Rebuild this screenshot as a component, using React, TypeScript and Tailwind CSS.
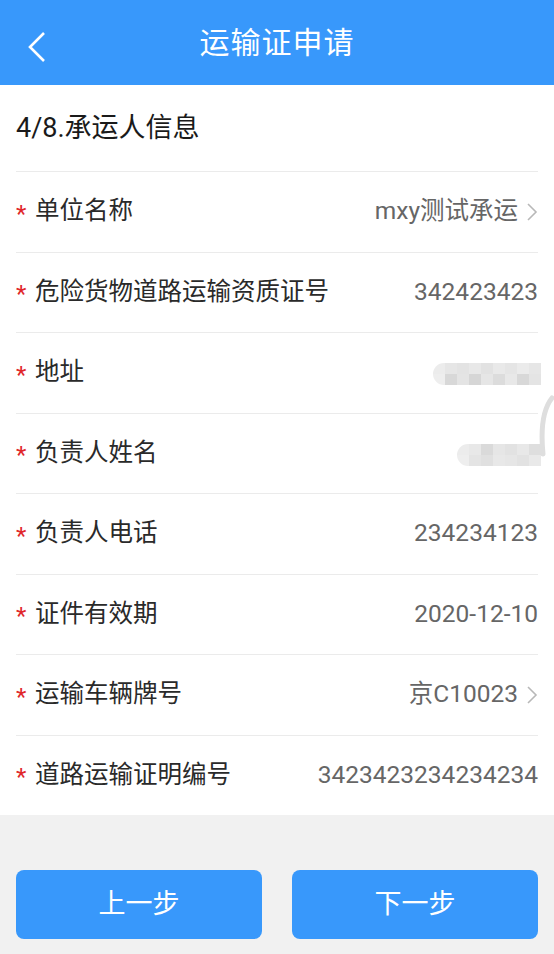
import React from "react";

const font = { fontFamily: "Roboto, 'Noto Sans CJK SC', sans-serif" };

function Chevron() {
  return (
    <svg width="12" height="20" viewBox="0 0 12 20" className="ml-[8px] shrink-0">
      <polyline points="2,2 10,10 2,18" fill="none" stroke="#b8b8b8" strokeWidth="1.6" />
    </svg>
  );
}

function Blur({ cells }: { cells: string[][] }) {
  return (
    <div className="flex flex-col overflow-hidden rounded-l-full">
      {cells.map((row, i) => (
        <div key={i} className="flex">
          {row.map((c, j) => (
            <div key={j} className="h-[11px] w-[12px]" style={{ background: c }} />
          ))}
        </div>
      ))}
    </div>
  );
}

const rows: { label: string; value?: string; arrow?: boolean; blur?: "addr" | "name" }[] = [
  { label: "单位名称", value: "mxy测试承运", arrow: true },
  { label: "危险货物道路运输资质证号", value: "342423423" },
  { label: "地址", blur: "addr" },
  { label: "负责人姓名", blur: "name" },
  { label: "负责人电话", value: "234234123" },
  { label: "证件有效期", value: "2020-12-10" },
  { label: "运输车辆牌号", value: "京C10023", arrow: true },
  { label: "道路运输证明编号", value: "3423423234234234" },
];

const addrCells = [
  ["#ececec", "#e6e6e6", "#e3e3e3", "#e8e8e8", "#e2e2e2", "#e9e9e9", "#e5e5e5", "#ebebeb", "#e6e6e6"],
  ["#eeeeee", "#d8d8d8", "#e4e4e4", "#d6d6d6", "#e6e6e6", "#dcdcdc", "#e8e8e8", "#d8d8d8", "#e4e4e4"],
];
const nameCells = [
  ["#ececec", "#e8e8e8", "#dadada", "#e6e6e6", "#e2e2e2", "#e8e8e8", "#dedede"],
  ["#eeeeee", "#e4e4e4", "#e0e0e0", "#e8e8e8", "#e6e6e6", "#e2e2e2", "#e9e9e9"],
];

export default function App() {
  return (
    <div className="relative flex h-[954px] w-[554px] flex-col bg-[#f1f1f1]" style={font}>
      <div className="relative flex h-[85px] items-center justify-center bg-[#3898fb]">
        <svg width="20" height="32" viewBox="0 0 20 32" className="absolute left-[27px] top-[31px]">
          <polyline points="17,2 3,16 17,30" fill="none" stroke="#ffffff" strokeWidth="2.6" />
        </svg>
        <span className="text-[30px] tracking-[1px] text-white">运输证申请</span>
      </div>
      <div className="bg-white px-[16px]">
        <div className="flex h-[86px] items-center text-[27px] text-[#1a1a1a]">4/8.承运人信息</div>
        {rows.map((r) => (
          <div key={r.label} className="flex h-[80.5px] items-center border-t border-[#ebebeb] text-[24.5px]">
            <span className="w-[19px] pt-[4px] text-[24px] text-[#e0262b]">*</span>
            <span className="text-[#2a2a2a]">{r.label}</span>
            <div className="ml-auto flex items-center">
              {r.value && <span className="text-[#666]">{r.value}</span>}
              {r.arrow && <Chevron />}
              {r.blur === "addr" && (
                <div className="-mr-[3px] pt-[3px]">
                  <Blur cells={addrCells} />
                </div>
              )}
              {r.blur === "name" && (
                <div className="-mr-[3px] pt-[4px]">
                  <Blur cells={nameCells} />
                </div>
              )}
            </div>
          </div>
        ))}
      </div>
      <div className="mt-[55px] flex gap-[30px] px-[16px]">
        <button className="flex h-[69px] flex-1 items-center justify-center rounded-[8px] bg-[#3898fb] text-[27px] text-white">
          上一步
        </button>
        <button className="flex h-[69px] flex-1 items-center justify-center rounded-[8px] bg-[#3898fb] text-[27px] text-white">
          下一步
        </button>
      </div>
      <svg width="20" height="70" viewBox="0 0 20 70" className="absolute left-[534px] top-[394px]">
        <path d="M18,4 C10,14 6,30 9,60" fill="none" stroke="#dedede" strokeWidth="5" strokeLinecap="round" />
      </svg>
    </div>
  );
}
